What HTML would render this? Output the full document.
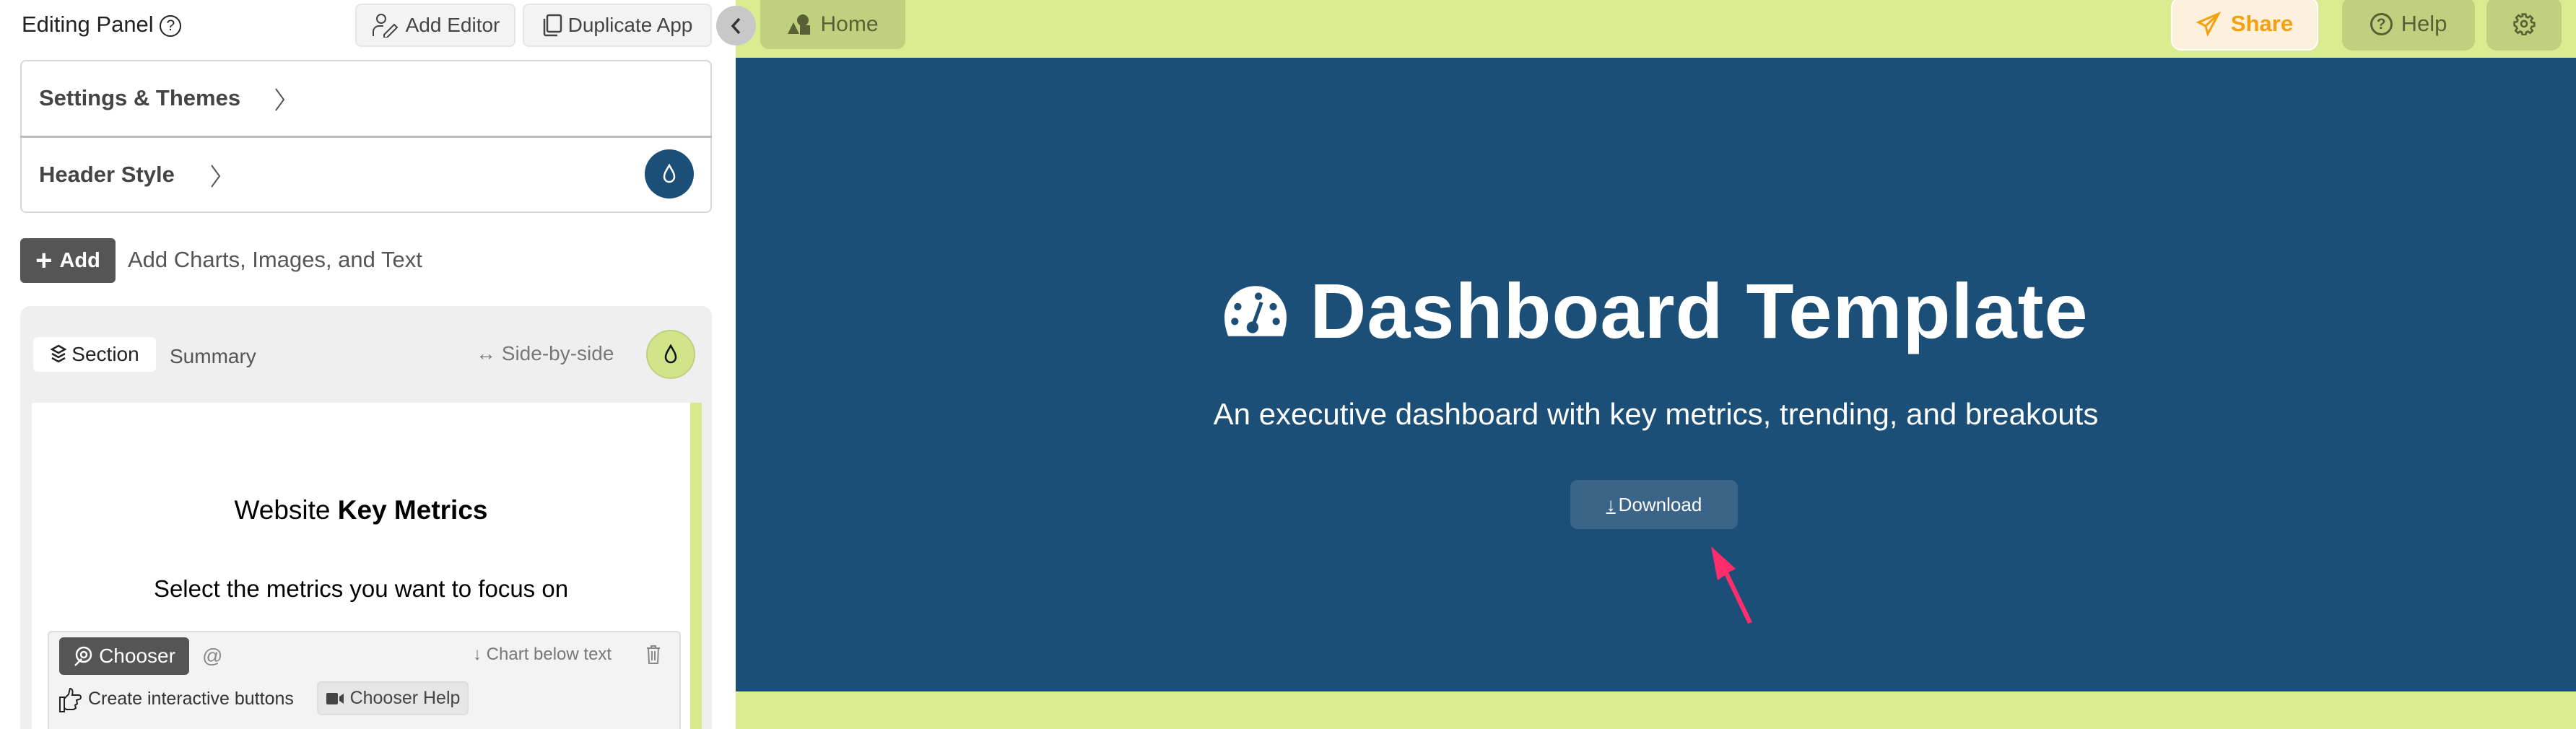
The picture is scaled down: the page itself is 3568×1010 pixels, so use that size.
<!DOCTYPE html>
<html><head><meta charset="utf-8"><style>
*{box-sizing:border-box;margin:0;padding:0}
html,body{width:3568px;height:1010px;overflow:hidden}
body{background:#fff;font-family:"Liberation Sans",sans-serif;position:relative}
.a{position:absolute}
.btn{position:absolute;background:#f3f3f3;border:2px solid #e6e6e6;border-radius:8px;color:#444;font-size:28px;display:flex;align-items:center;justify-content:center;gap:8px}
</style></head><body>
<!-- right side backgrounds -->
<div class="a" style="left:1019px;top:0;width:2549px;height:80px;background:#d9ec8f"></div>
<div class="a" style="left:1019px;top:80px;width:2549px;height:878px;background:#1b4f78"></div>
<div class="a" style="left:1019px;top:958px;width:2549px;height:52px;background:#d9ec8f"></div>

<!-- left panel -->
<div class="a" style="left:30px;top:16px;font-size:31px;color:#222">Editing Panel <span style="display:inline-block;width:30px;height:30px;border:2px solid #222;border-radius:50%;font-size:21px;text-align:center;line-height:26px;vertical-align:2px">?</span></div>
<div class="btn" style="left:492px;top:5px;width:222px;height:60px"><svg width="40" height="34" viewBox="0 0 40 34" fill="none" stroke="#444" stroke-width="2"><circle cx="14" cy="8" r="6"/><path d="M3 32v-6a8 8 0 0 1 8-8h6M18 30l14-14 4 4-14 14h-4z"/></svg>Add Editor</div>
<div class="btn" style="left:724px;top:5px;width:262px;height:60px"><svg width="28" height="32" viewBox="0 0 28 32" fill="none" stroke="#444" stroke-width="2.5"><rect x="7" y="2" width="19" height="23" rx="2"/><path d="M3 7v21a2 2 0 0 0 2 2h16"/></svg>Duplicate App</div>
<div class="a" style="left:992px;top:8px;width:55px;height:55px;border-radius:50%;background:#c8c8c8;display:flex;align-items:center;justify-content:center;z-index:5"><svg width="20" height="26" viewBox="0 0 20 26"><path d="M14 3L5 13l9 10" fill="none" stroke="#333" stroke-width="3.5"/></svg></div>

<div class="a" style="left:28px;top:83px;width:958px;height:212px;border:2px solid #d8d8d8;border-radius:8px"></div>
<div class="a" style="left:28px;top:188px;width:958px;height:3px;background:#bdbdbd"></div>
<div class="a" style="left:54px;top:118px;font-size:31px;font-weight:bold;color:#444">Settings &amp; Themes</div>
<svg class="a" style="left:378px;top:120px" width="20" height="36" viewBox="0 0 20 36"><path d="M4 3l11 15-11 15" fill="none" stroke="#555" stroke-width="2"/></svg>
<div class="a" style="left:54px;top:224px;font-size:31px;font-weight:bold;color:#444">Header Style</div>
<svg class="a" style="left:289px;top:226px" width="20" height="36" viewBox="0 0 20 36"><path d="M4 3l11 15-11 15" fill="none" stroke="#555" stroke-width="2"/></svg>
<div class="a" style="left:893px;top:207px;width:68px;height:68px;border-radius:50%;background:#1b4f78;display:flex;align-items:center;justify-content:center"><svg width="22" height="30" viewBox="0 0 22 30" fill="none" stroke="#fff" stroke-width="2.5"><path d="M11 3C7 10 4 14 4 19a7 7 0 0 0 14 0c0-5-3-9-7-16z"/></svg></div>

<div class="a" style="left:28px;top:330px;width:132px;height:62px;background:#555;border-radius:6px;color:#fff;font-size:29px;font-weight:bold;display:flex;align-items:center;justify-content:center;gap:10px"><span style="font-size:40px;font-weight:bold;line-height:1">+</span>Add</div>
<div class="a" style="left:177px;top:342px;font-size:31px;color:#555">Add Charts, Images, and Text</div>

<div class="a" style="left:28px;top:424px;width:958px;height:586px;background:#efefef;border-radius:14px 14px 0 0"></div>
<div class="a" style="left:46px;top:467px;width:170px;height:48px;background:#fff;border-radius:6px;font-size:28px;color:#222;display:flex;align-items:center;justify-content:center;gap:6px"><svg width="24" height="30" viewBox="0 0 24 30" fill="none" stroke="#222" stroke-width="2.5"><path d="M12 3l9 5-9 5-9-5zM3 14l9 5 9-5M3 20l9 5 9-5"/></svg>Section</div>
<div class="a" style="left:235px;top:478px;font-size:28px;color:#555">Summary</div>
<div class="a" style="left:659px;top:474px;font-size:28px;color:#777">↔ Side-by-side</div>
<div class="a" style="left:895px;top:457px;width:68px;height:68px;border-radius:50%;background:#d2e38a;border:2px solid #bfd07e;display:flex;align-items:center;justify-content:center"><svg width="22" height="30" viewBox="0 0 22 30" fill="none" stroke="#111" stroke-width="2.5"><path d="M11 3C7 10 4 14 4 19a7 7 0 0 0 14 0c0-5-3-9-7-16z"/></svg></div>
<div class="a" style="left:44px;top:558px;width:912px;height:452px;background:#fff"></div>
<div class="a" style="left:956px;top:558px;width:16px;height:452px;background:#d8ea8e"></div>
<div class="a" style="left:44px;top:686px;width:912px;text-align:center;font-size:37px;color:#000">Website <b>Key Metrics</b></div>
<div class="a" style="left:44px;top:797px;width:912px;text-align:center;font-size:33px;color:#000">Select the metrics you want to focus on</div>
<div class="a" style="left:66px;top:874px;width:877px;height:136px;background:#f3f3f3;border:2px solid #ddd;border-bottom:none;border-radius:6px 6px 0 0"></div>
<div class="a" style="left:82px;top:883px;width:180px;height:52px;background:#555;border-radius:6px;color:#fff;font-size:28px;display:flex;align-items:center;justify-content:center;gap:8px"><svg width="28" height="30" viewBox="0 0 28 30" fill="none" stroke="#fff" stroke-width="2.5"><circle cx="15" cy="13" r="10"/><circle cx="15" cy="13" r="4"/><path d="M3 28l9-9"/></svg>Chooser</div>
<div class="a" style="left:280px;top:893px;font-size:28px;color:#888">@</div>
<div class="a" style="left:655px;top:893px;font-size:24px;color:#777">↓ Chart below text</div>
<svg class="a" style="left:893px;top:892px" width="24" height="30" viewBox="0 0 24 30" fill="none" stroke="#888" stroke-width="2"><path d="M3 6h18M9 6V3h6v3M5 6l1 21h12l1-21M10 10v13M14 10v13"/></svg>
<svg class="a" style="left:80px;top:952px" width="34" height="36" viewBox="0 0 34 36" fill="none" stroke="#222" stroke-width="2"><path d="M3 14h6v20H3zM9 16l6-6 2-8c4 0 4 5 3 9h9a3 3 0 0 1 0 6l-3 1 1 5-3 2 1 4-3 2H12l-3-2"/></svg>
<div class="a" style="left:122px;top:954px;font-size:25px;color:#333">Create interactive buttons</div>
<div class="a" style="left:439px;top:944px;width:210px;height:47px;background:#e6e6e6;border:2px solid #ddd;border-radius:6px;font-size:25px;color:#444;display:flex;align-items:center;justify-content:center;gap:8px"><svg width="26" height="20" viewBox="0 0 26 20"><rect x="1" y="2" width="16" height="16" rx="2" fill="#444"/><path d="M19 7l6-4v14l-6-4z" fill="#444"/></svg>Chooser Help</div>

<!-- top bar buttons -->
<div class="a" style="left:1053px;top:0;width:201px;height:68px;background:#bfd07e;border-radius:0 0 12px 12px;font-size:30px;color:#5a6035;display:flex;align-items:center;justify-content:center;gap:12px"><svg width="34" height="30" viewBox="0 0 34 30" fill="#5a6035"><circle cx="22" cy="9" r="8"/><rect x="18" y="16" width="14" height="13"/><path d="M9 12l8 16H1z"/></svg>Home</div>
<div class="a" style="left:3007px;top:-4px;width:204px;height:74px;background:#fdf0dc;border:2px solid #fff;border-radius:14px;font-size:31px;font-weight:bold;color:#f5a00f;display:flex;align-items:center;justify-content:center;gap:14px"><svg width="34" height="34" viewBox="0 0 34 34" fill="none" stroke="#f5a00f" stroke-width="3"><path d="M31 3L3 15l10 5 3 11zM13 20L31 3"/></svg>Share</div>
<div class="a" style="left:3244px;top:-4px;width:184px;height:74px;background:#bfd07e;border-radius:14px;font-size:31px;color:#5a6035;display:flex;align-items:center;justify-content:center;gap:12px"><span style="display:inline-block;width:31px;height:31px;border:3px solid #5a6035;border-radius:50%;font-size:21px;font-weight:bold;text-align:center;line-height:25px">?</span>Help</div>
<div class="a" style="left:3444px;top:-4px;width:104px;height:74px;background:#bfd07e;border-radius:14px;display:flex;align-items:center;justify-content:center"><svg width="32" height="32" viewBox="0 0 24 24" fill="none" stroke="#5a6035" stroke-width="2"><circle cx="12" cy="12" r="3"/><path d="M10.3 2h3.4l.5 2.7 1.9.8 2.3-1.6 2.4 2.4-1.6 2.3.8 1.9 2.7.5v3.4l-2.7.5-.8 1.9 1.6 2.3-2.4 2.4-2.3-1.6-1.9.8-.5 2.7h-3.4l-.5-2.7-1.9-.8-2.3 1.6-2.4-2.4 1.6-2.3-.8-1.9L2 13.7v-3.4l2.7-.5.8-1.9-1.6-2.3 2.4-2.4 2.3 1.6 1.9-.8z"/></svg></div>

<div class="a" style="left:1019px;top:368px;width:2549px;display:flex;justify-content:center;align-items:center;gap:30px;color:#fff">
<svg width="90" height="74" viewBox="0 0 88 72"><path d="M44 2A42 42 0 0 0 2 44c0 10 2 18 5 26h74c3-8 5-16 5-26A42 42 0 0 0 44 2z" fill="#fff"/><circle cx="20" cy="30" r="5" fill="#1b4f78"/><circle cx="16" cy="50" r="5" fill="#1b4f78"/><circle cx="68" cy="30" r="5" fill="#1b4f78"/><circle cx="72" cy="50" r="5" fill="#1b4f78"/><circle cx="48" cy="16" r="5" fill="#1b4f78"/><path d="M52 24L42 52" stroke="#1b4f78" stroke-width="5"/><circle cx="40" cy="58" r="8" fill="#1b4f78"/></svg>
<span style="font-size:108px;font-weight:bold;letter-spacing:1px">Dashboard Template</span></div>
<div class="a" style="left:1019px;top:550px;width:2549px;text-align:center;font-size:42px;color:#fff">An executive dashboard with key metrics, trending, and breakouts</div>
<div class="a" style="left:2175px;top:665px;width:232px;height:68px;background:#3b6588;border-radius:10px;color:#fff;font-size:26px;display:flex;align-items:center;justify-content:center;gap:4px"><span style="text-decoration:underline">↓</span> Download</div>
<svg class="a" style="left:2360px;top:750px" width="100" height="115" viewBox="0 0 100 115"><path d="M10 7l34 31-10 5 33 69-6 2-32-67-10 7z" fill="#ff2d6b"/></svg>
</body></html>
